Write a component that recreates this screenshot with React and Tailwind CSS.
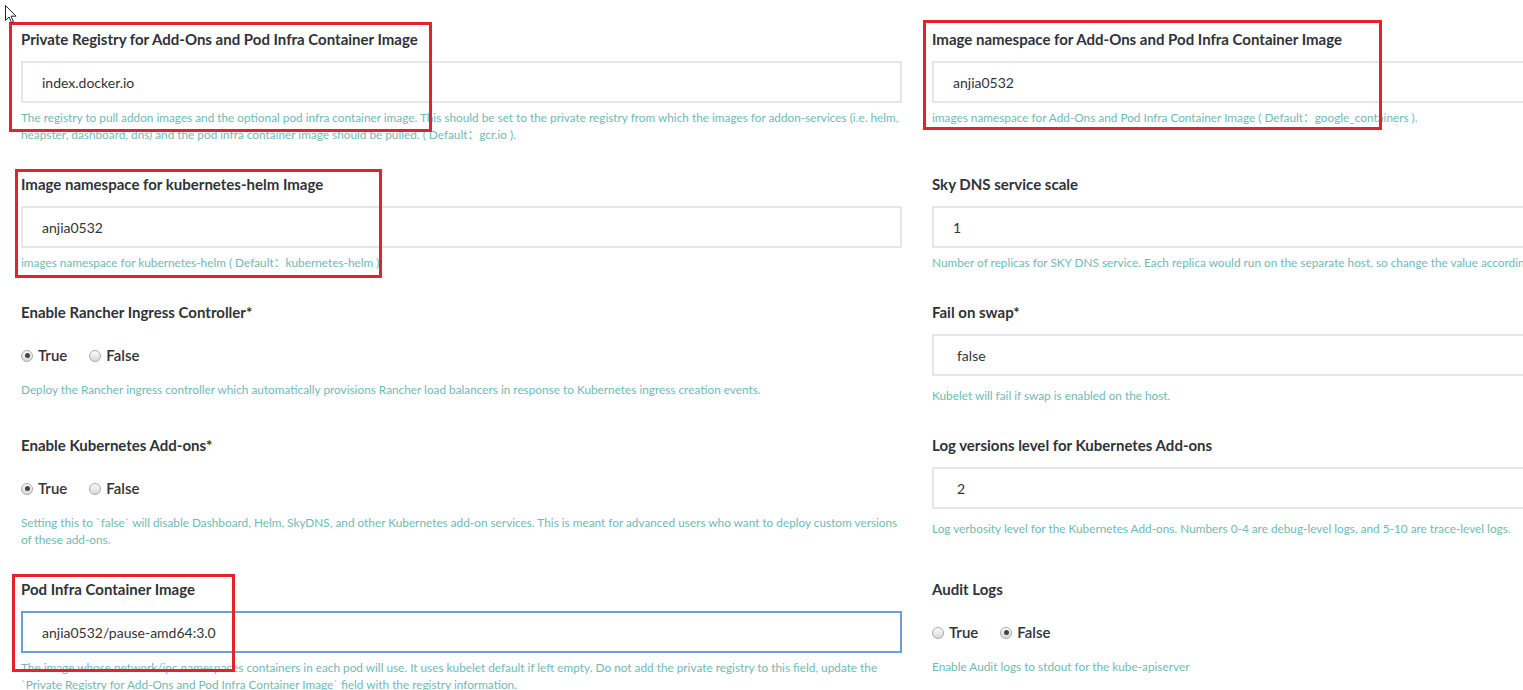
import React from "react";

const Label = ({ children }) => (
  <div className="text-[15px] leading-[21px] font-bold text-[#2f3337]">
    {children}
  </div>
);

const Help = ({ children, className = "" }) => (
  <p
    className={
      "text-[11.8px] leading-[17px] text-[#70bab5] font-['Lato','Noto_Sans_CJK_SC',sans-serif] " +
      className
    }
  >
    {children}
  </p>
);

const TextField = ({ value, focused, select }) => (
  <div
    className={
      "mt-[11px] h-[42px] flex items-center border-2 text-[14px] text-[#333] " +
      (focused ? "border-[#6a9fd8]" : "border-[#e6e6e6]") +
      (select ? " pl-[23px]" : " pl-[19px]")
    }
  >
    {value}
  </div>
);

const Radio = ({ checked, label }) => (
  <span className="flex items-center gap-[5px] mr-[22px]">
    <span className="w-[12px] h-[12px] rounded-full border border-[#a9a9a9] bg-gradient-to-b from-[#fbfbfb] to-[#d9d9d9] flex items-center justify-center">
      {checked && <span className="w-[5px] h-[5px] rounded-full bg-[#444]" />}
    </span>
    <span className="text-[15px] leading-[21px] font-semibold text-[#333]">
      {label}
    </span>
  </span>
);

const Radios = ({ value }) => (
  <div className="mt-[22px] flex items-center">
    <Radio checked={value === true} label="True" />
    <Radio checked={value === false} label="False" />
  </div>
);

const Mark = ({ className }) => (
  <div
    className={"absolute border-[3px] border-[#e3222c] pointer-events-none " + className}
  />
);

export default function App() {
  return (
    <div className="relative w-[1523px] h-[690px] overflow-hidden bg-white font-['Lato',sans-serif]">
      <div className="grid grid-cols-[881px_881px] gap-x-[30px] gap-y-[31px] pl-[21px] pt-[29px]">
        {/* row 1 */}
        <div>
          <Label>Private Registry for Add-Ons and Pod Infra Container Image</Label>
          <TextField value="index.docker.io" />
          <Help className="mt-[6px]">
            The registry to pull addon images and the optional pod infra container
            image. This should be set to the private registry from which the images
            for addon-services (i.e. helm, heapster, dashboard, dns) and the pod
            infra container image should be pulled. ( Default：gcr.io ).
          </Help>
        </div>
        <div>
          <Label>Image namespace for Add-Ons and Pod Infra Container Image</Label>
          <TextField value="anjia0532" />
          <Help className="mt-[6px]">
            images namespace for Add-Ons and Pod Infra Container Image ( Default：google_containers ).
          </Help>
        </div>

        {/* row 2 */}
        <div>
          <Label>Image namespace for kubernetes-helm Image</Label>
          <TextField value="anjia0532" />
          <Help className="mt-[6px]">
            images namespace for kubernetes-helm ( Default：kubernetes-helm ).
          </Help>
        </div>
        <div>
          <Label>Sky DNS service scale</Label>
          <TextField value="1" />
          <Help className="mt-[6px]">
            Number of replicas for SKY DNS service. Each replica would run on the
            separate host, so change the value accordingly.
          </Help>
        </div>

        {/* row 3 */}
        <div>
          <Label>Enable Rancher Ingress Controller*</Label>
          <Radios value={true} />
          <Help className="mt-[15px]">
            Deploy the Rancher ingress controller which automatically provisions
            Rancher load balancers in response to Kubernetes ingress creation events.
          </Help>
        </div>
        <div>
          <Label>Fail on swap*</Label>
          <TextField value="false" select />
          <Help className="mt-[11px]">Kubelet will fail if swap is enabled on the host.</Help>
        </div>

        {/* row 4 */}
        <div>
          <Label>Enable Kubernetes Add-ons*</Label>
          <Radios value={true} />
          <Help className="mt-[15px]">
            Setting this to `false` will disable Dashboard, Helm, SkyDNS, and other
            Kubernetes add-on services. This is meant for advanced users who want to
            deploy custom versions of these add-ons.
          </Help>
        </div>
        <div>
          <Label>Log versions level for Kubernetes Add-ons</Label>
          <TextField value="2" select />
          <Help className="mt-[11px]">
            Log verbosity level for the Kubernetes Add-ons. Numbers 0-4 are
            debug-level logs, and 5-10 are trace-level logs.
          </Help>
        </div>

        {/* row 5 */}
        <div>
          <Label>Pod Infra Container Image</Label>
          <TextField value="anjia0532/pause-amd64:3.0" focused />
          <Help className="mt-[6px]">
            The image whose network/ipc namespaces containers in each pod will use.
            It uses kubelet default if left empty. Do not add the private registry
            to this field, update the `Private Registry for Add-Ons and Pod Infra
            Container Image` field with the registry information.
          </Help>
        </div>
        <div>
          <Label>Audit Logs</Label>
          <Radios value={false} />
          <Help className="mt-[15px]">Enable Audit logs to stdout for the kube-apiserver</Help>
        </div>
      </div>

      {/* annotation boxes */}
      <Mark className="left-[9px] top-[22px] w-[423px] h-[110px]" />
      <Mark className="left-[923px] top-[20px] w-[459px] h-[110px]" />
      <Mark className="left-[15px] top-[169px] w-[367px] h-[109px]" />
      <Mark className="left-[12px] top-[574px] w-[223px] h-[98px]" />

      {/* mouse pointer */}
      <svg
        className="absolute left-[5px] top-[5px]"
        width="13"
        height="19"
        viewBox="0 0 13 19"
      >
        <path
          d="M0.5 0.5 L0.5 15.5 L4 12 L6.5 17.5 L8.5 16.6 L6 11.2 L11 11.2 Z"
          fill="#fff"
          stroke="#222"
          strokeWidth="1"
          strokeLinejoin="round"
        />
      </svg>
    </div>
  );
}
